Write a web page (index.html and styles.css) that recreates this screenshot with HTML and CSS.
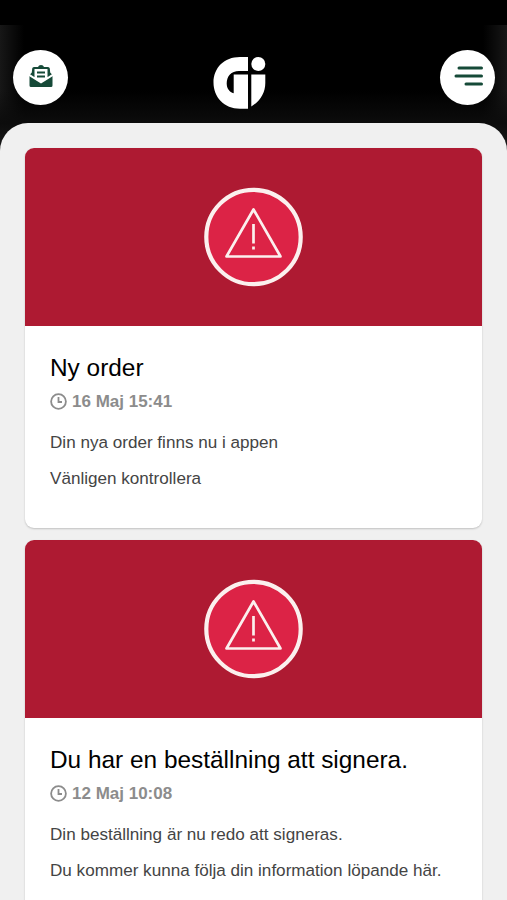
FILE: index.html
```html
<!DOCTYPE html>
<html lang="sv">
<head>
<meta charset="utf-8">
<title>Meddelanden</title>
<link rel="stylesheet" href="styles.css">
</head>
<body>
<div class="statusbar"></div>
<header class="topbar">
  <button class="round-button" aria-label="Meddelanden">
    <svg class="mail-icon" width="24" height="24" viewBox="0 0 24 24">
      <path fill="#164a38" d="M3.200 4.500Q3.400 3 5 3h4q.6-2 3-2t3 2h4q1.600 0 1.800 1.500l.4 4L23.500 11v10.500Q23.500 23 22 23H2Q.5 23 .5 21.500V11l2.300-2.500z"/>
      <path fill="#fff" d="M5.500 5h13v8.500L12 18l-6.500-4.500zM0 9.500l12 8 12-8v2.500l-12 7.500L0 12z"/>
      <path stroke="#164a38" stroke-width="1.800" d="M8 8.500h8M8 12.500h8"/>
    </svg>
  </button>
  <svg class="logo" width="54" height="54" viewBox="0 0 54 54" role="img" aria-label="Gi">
    <path fill="#fff" d="M35 2H27C11 2 .5 13 .5 27.500S11 53.700 27 53.700h8V19.500H20.700v18.700C16.500 37 13.700 33.500 13.700 28.500c0-7.500 4.500-12.600 12.300-12.600h9zM38.300 19.500h14V28c0 10-5.500 18.500-14 23.500z"/>
    <circle fill="#fff" cx="45.300" cy="9" r="7"/>
  </svg>
  <button class="round-button" aria-label="Meny">
    <svg class="menu-icon" width="30" height="22" viewBox="0 0 30 22"><path stroke="#164a38" stroke-width="3" stroke-linecap="round" d="M5 3h22.500M2 11h25.500M12 19h15.500"/></svg>
  </button>
</header>
<main class="sheet">
  <article class="card">
    <div class="banner">
      <svg width="100" height="100" viewBox="0 0 100 100">
        <circle cx="49.500" cy="50" r="47.200" fill="#dc2346" stroke="#fbf0ee" stroke-width="4.200"/>
        <path d="M49.500 22.500 22.500 69.500H76.500zM49.500 37V56.500M49.500 59.500v3" fill="none" stroke="#fbf0ee" stroke-width="2.700" stroke-linejoin="round"/>
      </svg>
    </div>
    <div class="content">
      <h2>Ny order</h2>
      <div class="date"><svg width="17" height="17" viewBox="0 0 17 17"><circle cx="8.500" cy="8.500" r="7.400"/><path d="M8.500 4v5h3.500"/></svg><span>16 Maj 15:41</span></div>
      <p>Din nya order finns nu i appen</p>
      <p>Vänligen kontrollera</p>
    </div>
  </article>
  <article class="card">
    <div class="banner">
      <svg width="100" height="100" viewBox="0 0 100 100">
        <circle cx="49.500" cy="50" r="47.200" fill="#dc2346" stroke="#fbf0ee" stroke-width="4.200"/>
        <path d="M49.500 22.500 22.500 69.500H76.500zM49.500 37V56.500M49.500 59.500v3" fill="none" stroke="#fbf0ee" stroke-width="2.700" stroke-linejoin="round"/>
      </svg>
    </div>
    <div class="content">
      <h2>Du har en beställning att signera.</h2>
      <div class="date"><svg width="17" height="17" viewBox="0 0 17 17"><circle cx="8.500" cy="8.500" r="7.400"/><path d="M8.500 4v5h3.500"/></svg><span>12 Maj 10:08</span></div>
      <p>Din beställning är nu redo att signeras.</p>
      <p>Du kommer kunna följa din information löpande här.</p>
      <p>Info</p>
    </div>
  </article>
</main>
</body>
</html>
```
FILE: styles.css
```css
* { box-sizing: border-box; }
body {
  margin: 0;
  height: 900px;
  overflow: hidden;
  background: #1a1a1a;
  font-family: "Liberation Sans", Arial, sans-serif;
}
.statusbar {
  height: 25px;
  background: #000;
}
.topbar {
  height: 125px;
  margin-bottom: -27px;
  padding: 24.5px 12px 0 13px;
  display: flex;
  justify-content: space-between;
  align-items: flex-start;
  background:
    linear-gradient(transparent 65px, #0c0c0c 98px, #1a1a1a 125px),
    linear-gradient(90deg, #171717, #000 24px, #000 calc(100% - 24px), #171717);
}
.round-button {
  width: 55px;
  height: 55px;
  padding: 0;
  border: 0;
  border-radius: 50%;
  background: #fff;
  display: flex;
  align-items: center;
  justify-content: center;
}
.mail-icon { margin: 0 0 2px; }
.menu-icon { margin: 0 0 2px 2px; }
.logo { margin: 5.5px 28px 0 0; }
.sheet {
  position: relative;
  height: 777px;
  padding: 25px 25px 0;
  border-radius: 28px 28px 0 0;
  background: #f0f0f0;
  overflow: hidden;
}
.card {
  height: 380px;
  margin-bottom: 12px;
  border-radius: 9px;
  background: #fff;
  box-shadow: 0 1px 2px #0003;
  overflow: hidden;
}
.banner {
  height: 178px;
  background: #ae1a32;
  display: flex;
  align-items: center;
  justify-content: center;
}
.content { padding: 27px 25px 0; }
h2 {
  margin: 0;
  font-size: 24.4px;
  line-height: 30px;
  font-weight: 400;
  color: #000;
}
.date {
  height: 20px;
  margin: 8px 0 22px;
  display: flex;
  align-items: center;
  gap: 5px;
  font-size: 17px;
  font-weight: 700;
  color: #8c8c8c;
}
.date svg { fill: none; stroke: #8c8c8c; stroke-width: 1.8; }
.date span { padding-top: 2px; }
p {
  margin: 0 0 16px;
  font-size: 17.1px;
  line-height: 20px;
  color: #444;
  white-space: nowrap;
}
```
